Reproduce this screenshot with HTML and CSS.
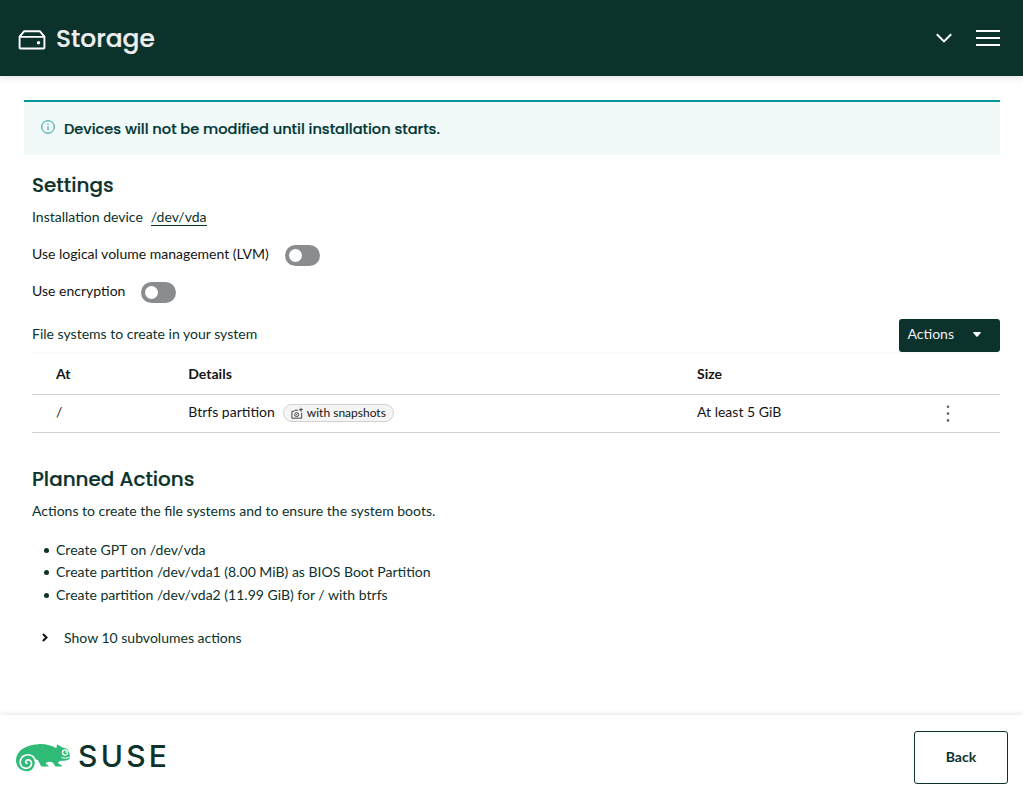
FILE: index.html
```html
<!DOCTYPE html>
<html lang="en">
<head>
<meta charset="utf-8">
<title>Storage</title>
<link rel="stylesheet" href="styles.css">
</head>
<body>
<header class="topbar">
  <svg class="drive-icon" width="28" height="20" viewBox="0 0 28 20" fill="none" stroke="#fff" stroke-width="1.900" stroke-linejoin="round"><path d="M1.600 6.700 6 1.300h16l4.400 5.400v11q0 .8-.8.800H2.400q-.8 0-.8-.8zM1.600 6.900h24.800"/><circle cx="20.500" cy="12.700" r="1.700" fill="#fff" stroke="none"/></svg>
  <h1 class="title">Storage</h1>
  <svg class="chevron" width="16" height="10" viewBox="0 0 16 10" fill="none" stroke="#fff" stroke-width="2"><path d="m.8 1.2 7.2 7.2 7.2-7.2"/></svg>
  <svg class="menu" width="24" height="16" viewBox="0 0 24 16" fill="#fff"><path d="M0 0h24v2H0zM0 7h24v2H0zM0 14h24v2H0z"/></svg>
</header>
<main class="content">
  <div class="alert">
    <svg class="info" width="14" height="14" viewBox="0 0 14 14" fill="none" stroke="#209d99"><circle cx="7" cy="7" r="6.3"/><path d="M7 6.2v4M7 3.6v1.3"/></svg>
    <h4 class="alert-title">Devices will not be modified until installation starts.</h4>
  </div>
  <section class="settings">
    <h2 class="heading heading-settings">Settings</h2>
    <div class="row device"><span>Installation device</span><a class="link">/dev/vda</a></div>
    <div class="row switch-row"><span>Use logical volume management (LVM)</span><span class="switch"></span></div>
    <div class="row switch-row"><span>Use encryption</span><span class="switch"></span></div>
    <div class="toolbar">
      <span class="toolbar-text">File systems to create in your system</span>
      <button class="actions"><span class="actions-text">Actions</span><svg width="8" height="5" viewBox="0 0 8 5" fill="#fff"><path d="M.6 0h6.8q.9.3.3 1L4.6 4.6q-.6.6-1.2 0L.3 1Q-.3.3.6 0"/></svg></button>
    </div>
    <div class="table">
      <div class="tr head"><span>At</span><span>Details</span><span>Size</span><span></span></div>
      <div class="tr"><span>/</span>
        <span class="details"><span>Btrfs partition</span><span class="label"><svg width="12" height="12" viewBox="0 0 12 12" fill="none" stroke="#333" stroke-width=".9"><path d="M7.200 3.200H4L3 4.300H.9v6.900h9.800V5.700M10 .8v3.800M8.100 2.700h3.800"/><circle cx="5.700" cy="7.600" r="2"/><circle cx="5.700" cy="7.600" r=".3"/></svg><span class="snapshots">with snapshots</span></span></span>
        <span>At least 5 GiB</span>
        <span class="kebab"><svg width="4" height="17" viewBox="0 0 4 17" fill="#606267"><circle cx="2" cy="1.800" r="1.300"/><circle cx="2" cy="8.600" r="1.300"/><circle cx="2" cy="15.400" r="1.300"/></svg></span>
      </div>
    </div>
  </section>
  <section class="planned">
    <h2 class="heading heading-planned">Planned Actions</h2>
    <p class="description">Actions to create the file systems and to ensure the system boots.</p>
    <ul class="list">
      <li>Create GPT on /dev/vda</li>
      <li>Create partition /dev/vda1 (8.00 MiB) as BIOS Boot Partition</li>
      <li>Create partition /dev/vda2 (11.99 GiB) for / with btrfs</li>
    </ul>
    <div class="expand"><svg class="expand-icon" width="6" height="9" viewBox="0 0 6 9" fill="none" stroke="#151515" stroke-width="2.100"><path d="m.9.9 3.600 3.600L.9 8.100"/></svg><span>Show 10 subvolumes actions</span></div>
  </section>
</main>
<footer class="footer">
  <div class="logo">
    <svg class="chameleon" width="54" height="28" viewBox="0 0 54 28"><path fill="#30ba78" d="M11 27.300C4.700 27.300 0 22.500 0 16.200 0 6.800 9.500 1 22 .2c7.500-.5 13.500 1.500 18.500 4.100L40.900.8q.3-.5 1 0L46.500 3.500c3 .4 5.200 1.300 6 3.400.8 2 1.500 4.300 1.500 6.500-.3 2.400-3.600 3.200-6.500 3.300-3.200-.1-4.800.4-5.300 1.800-.3 1.200 1 1.800 2.600 2.200l1 .6v1.200h-6.300l-3-4.200c-2.100-1-4.800-.7-6 .2-1.100 1-.4 1.900 1.200 2.500l.8.500v1h-7.200l-3.100-5.700c-1.100-1.300-2-1.300-3.100-1.100C18.800 22 17 27.300 11 27.300z"/><path fill="none" stroke="#fff" stroke-width="1.700" stroke-linecap="round" d="M19.300 17.500C18.500 11 11.500 9 6.800 12.500c-4.200 3.300-3.200 10.500 2 11.700 3.700.8 7-2 6.700-5.300-.3-2.700-3.300-4-5.200-2.400-1.300 1.200-.5 2.800.7 2.800"/><circle cx="49" cy="8.500" r="3.200" fill="#fff"/><circle cx="49.300" cy="8.500" r="2.100" fill="#30ba78"/><circle cx="50.200" cy="8.100" r=".9" fill="#fff"/><path fill="none" stroke="#fff" stroke-width="1" d="M45.500 13.600q4.500 1.500 8.300-.5"/></svg>
    <span class="wordmark">SUSE</span>
  </div>
  <button class="back"><span class="back-text">Back</span></button>
</footer>
</body>
</html>
```
FILE: styles.css
```css
* { box-sizing: border-box; }
body { margin: 0; height: 799px; display: flex; flex-direction: column; overflow: hidden; background: #fff; color: #151515; font: 14.020px/21px Lato, sans-serif; }
h1, h2, h4, p, ul { margin: 0; }
svg { flex: none; display: block; }
button { font: inherit; cursor: pointer; }
.topbar { height: 76px; flex: none; display: flex; align-items: center; padding: 0 23px 0 18px; background: #0c322c; box-shadow: 0 2px 6px rgba(30, 0, 40, .13); }
.drive-icon { margin-top: 4px; }
.title { margin: 2px 0 0 10px; color: #efefef; font: 500 24.900px/36px Poppins, Inter, sans-serif; -webkit-text-stroke: .2px; }
.chevron { margin-left: auto; }
.menu { margin-left: 24px; }
.content { flex: 1; padding: 24px 23px 0 24px; }
.alert { height: 55px; display: flex; padding: 16px; border-top: 2px solid #009596; background: #f2f9f9; }
.info { margin: 2px 0 0 1px; }
.alert-title { margin: 1px 0 0 9px; color: #003737; font: 500 14.600px/21px Poppins, Inter, sans-serif; -webkit-text-stroke: .2px; }
.settings { padding-left: 8px; }
.heading { color: #0c322c; font: 500 19.950px/30px Poppins, Inter, sans-serif; -webkit-text-stroke: .2px; }
.heading-settings { margin-top: 15px; }
.row { display: flex; align-items: center; }
.device { height: 21px; margin-top: 6px; gap: 8px; color: #0c322c; }
.link { line-height: 17px; border-bottom: 1px solid #0c322c; }
.switch-row { height: 21px; margin-top: 16px; gap: 16px; }
.switch { width: 35px; height: 21px; margin-top: 3px; padding: 4px; border-radius: 11px; background: #8a8d90; }
.switch::before { content: ""; display: block; width: 13px; height: 13px; border-radius: 50%; background: #fff; }
.toolbar { display: flex; justify-content: space-between; margin-top: 18px; height: 33px; }
.toolbar-text { line-height: 30px; color: #0c322c; }
.actions { display: flex; align-items: center; gap: 19px; width: 101px; height: 33px; padding: 0 8.500px 2px; border: 0; border-radius: 3px; background: #0c322c; color: #efefef; }
.actions-text { padding-bottom: 2px; }
.tr { display: grid; grid-template-columns: 132.300px 508.700px 240px 1fr; height: 38px; padding-left: 24px; border-bottom: 1px solid #d2d2d2; line-height: 34px; }
.head { height: 43px; border-top: 1px solid #fafafa; font-weight: 700; line-height: 41px; }
.details { display: flex; height: 34px; gap: 8px; }
.label { display: flex; align-items: center; gap: 4px; width: 111px; height: 18px; margin-top: 9px; padding: 0 7px; border: 1px solid #d2d2d2; border-radius: 9px; background: #f5f5f5; font-size: 12px; line-height: 16px; }
.snapshots { white-space: nowrap; }
.kebab { padding: 10.300px 0 0 9px; }
.planned { padding: 31px 0 0 8px; color: #0c322c; }
.description { margin-top: 6px; }
.list { margin-top: 18px; padding-left: 24px; line-height: 22.400px; list-style: none; }
.list li::before { content: ""; display: inline-block; width: 5px; height: 5px; margin: 0 7px 2px -12px; border-radius: 50%; background: #0c322c; }
.expand { display: flex; align-items: center; gap: 16px; margin-top: 20.800px; padding-left: 10px; }
.expand-icon { margin-top: -1px; }
.footer { height: 84px; flex: none; display: flex; align-items: center; justify-content: space-between; padding: 0 15px 0 16px; background: #fff; box-shadow: 0 -2px 4px rgba(0, 0, 0, .08); }
.logo { display: flex; align-items: center; gap: 8px; }
.chameleon { margin-top: 1px; }
.wordmark { margin-top: -3px; color: #0c322c; font: 500 30px/30px Inter, sans-serif; letter-spacing: 3.300px; }
.back { width: 94px; height: 53px; padding-bottom: 3px; border: 1px solid #0c322c; border-radius: 3px; background: #fff; color: #0c322c; font-weight: 700; }
```
